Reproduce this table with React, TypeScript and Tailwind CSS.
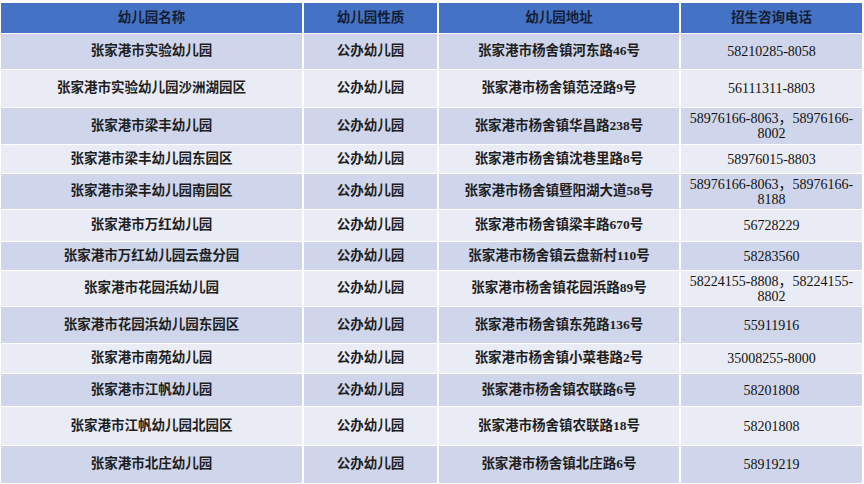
const font = { fontFamily: '"Liberation Serif", "Noto Sans CJK SC", serif' };

type Row = { name: string; addr: string; phone: string[]; h: string };

const rows: Row[] = [
	{ name: "张家港市实验幼儿园", addr: "张家港市杨舍镇河东路46号", phone: ["58210285-8058"], h: "h-[35px]" },
	{ name: "张家港市实验幼儿园沙洲湖园区", addr: "张家港市杨舍镇范泾路9号", phone: ["56111311-8803"], h: "h-[37px]" },
	{ name: "张家港市梁丰幼儿园", addr: "张家港市杨舍镇华昌路238号", phone: ["58976166-8063，58976166-", "8002"], h: "h-[36px]" },
	{ name: "张家港市梁丰幼儿园东园区", addr: "张家港市杨舍镇沈巷里路8号", phone: ["58976015-8803"], h: "h-[28px]" },
	{ name: "张家港市梁丰幼儿园南园区", addr: "张家港市杨舍镇暨阳湖大道58号", phone: ["58976166-8063，58976166-", "8188"], h: "h-[35px]" },
	{ name: "张家港市万红幼儿园", addr: "张家港市杨舍镇梁丰路670号", phone: ["56728229"], h: "h-[31px]" },
	{ name: "张家港市万红幼儿园云盘分园", addr: "张家港市杨舍镇云盘新村110号", phone: ["58283560"], h: "h-[28px]" },
	{ name: "张家港市花园浜幼儿园", addr: "张家港市杨舍镇花园浜路89号", phone: ["58224155-8808，58224155-", "8802"], h: "h-[35px]" },
	{ name: "张家港市花园浜幼儿园东园区", addr: "张家港市杨舍镇东苑路136号", phone: ["55911916"], h: "h-[36px]" },
	{ name: "张家港市南苑幼儿园", addr: "张家港市杨舍镇小菜巷路2号", phone: ["35008255-8000"], h: "h-[29px]" },
	{ name: "张家港市江帆幼儿园", addr: "张家港市杨舍镇农联路6号", phone: ["58201808"], h: "h-[32px]" },
	{ name: "张家港市江帆幼儿园北园区", addr: "张家港市杨舍镇农联路18号", phone: ["58201808"], h: "h-[38px]" },
	{ name: "张家港市北庄幼儿园", addr: "张家港市杨舍镇北庄路6号", phone: ["58919219"], h: "h-[37px]" },
];

const cols = "grid grid-cols-[301px_133px_240px_181px] gap-x-[2px]";

export default function App() {
	return (
		<div className="w-[864px] h-[484px] bg-white pt-[3px] pl-[1px] overflow-hidden text-[#1e1e1e]" style={font}>
			<div className="flex flex-col gap-y-px">
				{/* header */}
				<div className={`${cols} h-[30px] text-[13.5px] font-bold`}>
					{["幼儿园名称", "幼儿园性质", "幼儿园地址", "招生咨询电话"].map((t) => (
						<div key={t} className="bg-[#4472c4] flex items-center justify-center text-[#141d33]">
							{t}
						</div>
					))}
				</div>

				{rows.map((r, i) => {
					const bg = i % 2 === 0 ? "bg-[#cfd5ea]" : "bg-[#e9ebf5]";
					return (
						<div key={r.name} className={`${cols} ${r.h} text-[13.5px]`}>
							<div className={`${bg} flex items-center justify-center font-bold`}>{r.name}</div>
							<div className={`${bg} flex items-center justify-center font-bold`}>公办幼儿园</div>
							<div className={`${bg} flex items-center justify-center font-bold`}>{r.addr}</div>
							<div className={`${bg} flex flex-col items-center justify-center text-[14px] leading-[15px] text-[#111]`}>
								{r.phone.map((p) => (
									<span key={p}>{p}</span>
								))}
							</div>
						</div>
					);
				})}
			</div>
		</div>
	);
}
